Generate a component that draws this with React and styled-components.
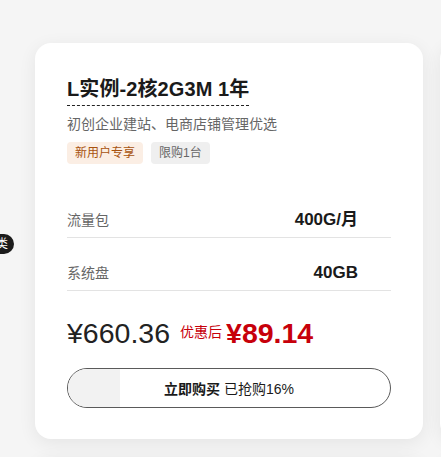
import styled, { createGlobalStyle } from "styled-components";

const GlobalStyle = createGlobalStyle`
  html, body {
    margin: 0;
    padding: 0;
    background: #f5f5f5;
    font-family: "Liberation Sans", "Noto Sans CJK SC", sans-serif;
  }
`;

const Page = styled.div`
  position: relative;
  width: 441px;
  height: 457px;
  overflow: hidden;
  background: #f5f5f5;
`;

const Grid = styled.div`
  display: grid;
  grid-template-columns: repeat(2, 388px);
  gap: 18px 17px;
  padding: 43px 0 0 35px;
`;

const Card = styled.div`
  box-sizing: border-box;
  width: 388px;
  padding: 32px 32px 31px;
  background: #fff;
  border-radius: 16px;
  box-shadow: 0 4px 18px rgba(0, 0, 0, 0.07);
`;

const Title = styled.h3`
  display: inline-block;
  margin: 0;
  padding-bottom: 2px;
  font-size: 20px;
  line-height: 28px;
  font-weight: 700;
  letter-spacing: 0.1px;
  color: #1a1a1a;
  border-bottom: 1px dashed #222;
`;

const Desc = styled.p`
  margin: 8px 0 0;
  font-size: 14px;
  line-height: 20px;
  color: #666;
`;

const Tags = styled.div`
  display: flex;
  gap: 8px;
  margin-top: 8px;
`;

const Tag = styled.span`
  padding: 0 8px;
  height: 22px;
  line-height: 22px;
  font-size: 12px;
  border-radius: 4px;
  color: ${(p) => (p.$hot ? "#a8520e" : "#666")};
  background: ${(p) => (p.$hot ? "#fbeee4" : "#efefef")};
`;

const Specs = styled.div`
  margin-top: 21px;
`;

const SpecRow = styled.div`
  display: flex;
  justify-content: space-between;
  align-items: center;
  padding: 26px 33px 8px 0;
  line-height: 18px;
  border-bottom: 1px solid #e3e3e3;
`;

const SpecLabel = styled.span`
  font-size: 14px;
  color: #666;
`;

const SpecValue = styled.span`
  font-size: 17px;
  font-weight: 700;
  color: #1a1a1a;
`;

const PriceRow = styled.div`
  display: flex;
  align-items: center;
  margin-top: 24px;
  height: 36px;
`;

const OldPrice = styled.span`
  font-size: 28.5px;
  color: #222;
`;

const PromoLabel = styled.span`
  margin: 0 4px 0 10px;
  font-size: 14px;
  color: #c7000b;
  position: relative;
  top: -2px;
`;

const NewPrice = styled.span`
  font-size: 28.5px;
  font-weight: 700;
  color: #c7000b;
`;

const BuyButton = styled.button`
  position: relative;
  display: flex;
  align-items: center;
  justify-content: center;
  box-sizing: border-box;
  width: 100%;
  height: 40px;
  margin-top: 17px;
  padding: 0;
  overflow: hidden;
  border: 1px solid #5a5a5a;
  border-radius: 20px;
  background: #fff;
  font-family: inherit;
  font-size: 14px;
  color: #1a1a1a;
  cursor: pointer;
`;

const Progress = styled.span`
  position: absolute;
  left: 0;
  top: 0;
  bottom: 0;
  background: #f2f2f2;
`;

const ButtonText = styled.span`
  position: relative;

  b {
    font-weight: 700;
  }
`;

const SidePill = styled.div`
  position: absolute;
  left: -28px;
  top: 234px;
  height: 20px;
  line-height: 20px;
  padding: 0 6px 0 12px;
  border-radius: 10px;
  background: #1c1c1c;
  color: #fff;
  font-size: 12px;
`;

const plans = [
  { title: "L实例-2核2G3M 1年", traffic: "400G/月", disk: "40GB", old: "660.36", price: "89.14", sold: 16 },
  { title: "L实例-2核4G5M 1年", traffic: "1000G/月", disk: "60GB", old: "1020.00", price: "199.00", sold: 24 },
  { title: "L实例-4核8G 1年", traffic: "1500G/月", disk: "80GB", old: "2040.00", price: "699.00", sold: 8 },
  { title: "L实例-8核16G 1年", traffic: "2000G/月", disk: "160GB", old: "4080.00", price: "1499.00", sold: 5 },
];

function PlanCard({ plan }) {
  return (
    <Card>
      <Title>{plan.title}</Title>
      <Desc>初创企业建站、电商店铺管理优选</Desc>
      <Tags>
        <Tag $hot>新用户专享</Tag>
        <Tag>限购1台</Tag>
      </Tags>
      <Specs>
        <SpecRow>
          <SpecLabel>流量包</SpecLabel>
          <SpecValue>{plan.traffic}</SpecValue>
        </SpecRow>
        <SpecRow>
          <SpecLabel>系统盘</SpecLabel>
          <SpecValue>{plan.disk}</SpecValue>
        </SpecRow>
      </Specs>
      <PriceRow>
        <OldPrice>¥{plan.old}</OldPrice>
        <PromoLabel>优惠后</PromoLabel>
        <NewPrice>¥{plan.price}</NewPrice>
      </PriceRow>
      <BuyButton>
        <Progress style={{ width: `${plan.sold}%` }} />
        <ButtonText>
          <b>立即购买</b> 已抢购{plan.sold}%
        </ButtonText>
      </BuyButton>
    </Card>
  );
}

export default function App() {
  return (
    <>
      <GlobalStyle />
      <Page>
        <Grid>
          {plans.map((plan) => (
            <PlanCard key={plan.title} plan={plan} />
          ))}
        </Grid>
        <SidePill>分类</SidePill>
      </Page>
    </>
  );
}
